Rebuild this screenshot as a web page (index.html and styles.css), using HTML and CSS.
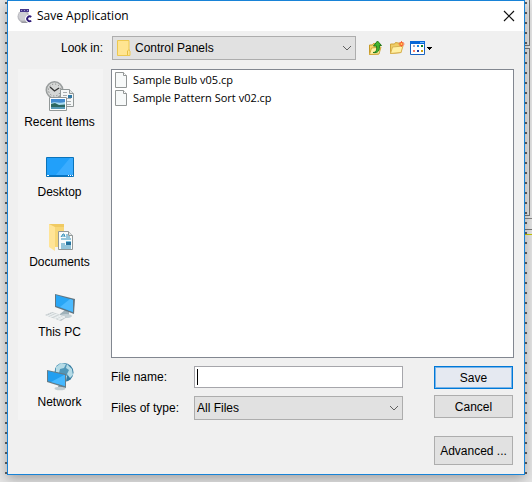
FILE: index.html
```html
<!DOCTYPE html>
<html lang="en">
<head>
<meta charset="utf-8">
<title>Save Application</title>
<meta name="viewport" content="width=device-width, initial-scale=1">
<link rel="stylesheet" href="styles.css">
</head>
<body>
<div class="backdrop" aria-hidden="true">
  <div class="pane pane-top"></div>
  <div class="pane pane-middle"></div>
  <div class="pane-rule"></div>
</div>
<form class="dialog" role="dialog" aria-labelledby="dialog-title">
  <header class="titlebar">
    <svg class="app-icon" width="16" height="16" viewBox="0 0 16 16" aria-hidden="true">
      <circle cx="6.500" cy="8.500" r="6" fill="#b9b9bf"/>
      <circle cx="6" cy="8" r="4.500" fill="#cfcfd4"/>
      <path d="M3 13.500h8l1 1.500H5z" fill="#9a9aa2"/>
      <path d="M3 1h9v3H3z" fill="#493a8b"/>
      <path d="M4 2.500h1m2 0h1m2 0h1" stroke="#a79dd4"/>
      <path d="M14.200 9A2.400 2.400 0 1 0 14.200 12.600" fill="none" stroke="#fff" stroke-width="4"/>
      <path d="M14.200 9A2.400 2.400 0 1 0 14.200 12.600" fill="none" stroke="#2e1a78" stroke-width="1.900"/>
    </svg>
    <h1 id="dialog-title">Save Application</h1>
    <button class="close" type="button" aria-label="Close">
      <svg width="12" height="12" viewBox="0 0 12 12" aria-hidden="true"><path d="m1 1 10 10M11 1 1 11" fill="none" stroke="#111" stroke-width="1.200"/></svg>
    </button>
  </header>
  <div class="content">
    <label class="look-label" for="folder">Look in:</label>
    <div class="toolbar">
      <div class="combo folder-combo">
        <svg class="combo-folder" width="14" height="16" viewBox="0 0 14 16" aria-hidden="true">
          <path d="M.5.500h11.500v9.500l1 1v4.500H.5z" fill="#ffe591" stroke="#edc84f"/>
          <path d="M10.500 15V11l1.500-1.500" fill="none" stroke="#e7bf3f"/>
        </svg>
        <select id="folder"><option>Control Panels</option></select>
        <svg class="chevron" width="10" height="6" viewBox="0 0 10 6" aria-hidden="true"><path d="m1 1 4 4 4-4"/></svg>
      </div>
      <button class="tool" type="button" aria-label="Up one level">
        <svg width="16" height="16" viewBox="0 0 16 16" aria-hidden="true">
          <path d="M1.500 14.500V5h3l1-1.500 5 1V14z" fill="#f3d56b" stroke="#c79b29"/>
          <path d="m1.500 14.500 2-6.500 9.500-1-2 7z" fill="#fff0a3" stroke="#d2a83a"/>
          <path d="M5 12.500c4 0 4-4 3.500-6.500H5.500L9.500 1l4 4.500h-2.200c.7 4.500-1 8-6.300 7z" fill="#42b62e" stroke="#23791e"/>
        </svg>
      </button>
      <button class="tool" type="button" aria-label="New folder">
        <svg width="16" height="16" viewBox="0 0 16 16" aria-hidden="true">
          <path d="M1.500 13.500V4h4l1-1.500 5.500 1v9z" fill="#efcd65" stroke="#d0a43a"/>
          <path d="m1.500 13.500 2-6.500L14 6l-2 6.500z" fill="#fff0a3" stroke="#d9b252"/>
          <path d="M12.500 1v6M9.500 4h6M10.500 2l4 4m0-4-4 4" stroke="#f27845"/>
          <circle cx="12.500" cy="4" r="2" fill="#fa5d2d"/><circle cx="12.500" cy="4" r="1" fill="#ffd15a"/>
        </svg>
      </button>
      <button class="tool tool-view" type="button" aria-label="View menu">
        <svg width="22" height="16" viewBox="0 0 22 16" aria-hidden="true">
          <path d="M.5 1.500h14v13H.5z" fill="#fff" stroke="#1763c2"/>
          <path d="M0 1h15v3H0z" fill="#0867d7"/><path d="M10 2.500h4" stroke="#6db9ff"/>
          <path d="M3 5h2v2H3z" fill="#a8a8c4"/><path d="M7 5h2v2H7z" fill="#1c86e0"/><path d="M11 5h2v2h-2z" fill="#148328"/>
          <path d="M3 10h2v2H3z" fill="#fa7d62"/><path d="M7 10h2v2H7z" fill="#1b3ca0"/><path d="M11 10h2v2h-2z" fill="#c99c12"/>
          <path d="M17 7h5v1h-1v1h-1v1h-1V9h-1V8h-1z"/>
        </svg>
      </button>
    </div>
    <nav class="places" aria-label="Places">
      <button class="place" type="button">
        <svg width="32" height="32" viewBox="0 0 32 32" aria-hidden="true">
          <circle cx="10.500" cy="10" r="8.200" fill="#d5d7d6" stroke="#999d9d" stroke-width="1.600"/>
          <circle cx="10.500" cy="10" r="6" fill="none" stroke="#777" stroke-dasharray="1 2.140"/>
          <path d="m6 7 4.500 4L15 8" fill="none" stroke="#333" stroke-width="1.300"/>
          <path d="M16.500 9.500h9l4 4v13h-13z" fill="#f5f7f7" stroke="#929898"/>
          <path d="M25.500 9.500v4h4" fill="#dde2e2" stroke="#929898"/>
          <path d="M19 12.500h4m-4 3h4m-4 3h8m-8 3h8m-8 3h8" stroke="#a7acaf"/><path d="M24 15h4v3h-4z" fill="#3279a5"/>
          <path d="M5.500 17.500h17v13h-17z" fill="#fff" stroke="#929898"/>
          <path d="M7 19h14v10H7z" fill="#418bd1"/><path d="M7 23c4-2 8 1 14-1v4H7z" fill="#acdcf2"/><path d="m7 24 4-1 4 2 6-.5V29H7z" fill="#2c6862"/><path d="M7 27h14v2H7z" fill="#579ab6"/>
        </svg>
        <span>Recent Items</span>
      </button>
      <button class="place" type="button">
        <svg width="32" height="32" viewBox="0 0 32 32" aria-hidden="true">
          <path d="M2.500 7.500h27v19h-27z" fill="#21a0fa" stroke="#0a73ba"/>
          <path d="M11 26 26 8h3v18z" fill="#3aacff"/><path d="M3 25.500h26" stroke="#0875c5"/><path d="M3 25.500h2m19 0h1m1 0h1m1 0h1" stroke="#fff"/>
        </svg>
        <span>Desktop</span>
      </button>
      <button class="place" type="button">
        <svg width="32" height="32" viewBox="0 0 32 32" aria-hidden="true">
          <path d="M5 4h15v23H5z" fill="#f0ca62"/><path d="m5 4 6 3v24l-6-4z" fill="#ffe497"/><path d="M11 7h9v20h-9z" fill="#f7d778"/>
          <path d="M14.500 11.500h10l4 4v14h-14z" fill="#fafcfc" stroke="#929898"/><path d="M24.500 11.500v4h4" fill="#e0e3e4" stroke="#929898"/>
          <path d="m17 17 2-3h1l1 3m-3-1h2m2-1h2m-2 2h4m-9 2h10m-10 5h4m-4 2h10m-10 2h10" fill="none" stroke="#318eb8"/>
          <path d="M22 21h5v4h-5z" fill="#27749f"/><path d="M22 21h5v1h-5z" fill="#80c4e1"/>
        </svg>
        <span>Documents</span>
      </button>
      <button class="place" type="button">
        <svg width="32" height="32" viewBox="0 0 32 32" aria-hidden="true">
          <path d="m16 24 5-4 4 2v4l-3 2-6-2z" fill="#9fb1b9"/><ellipse cx="22" cy="26" rx="6" ry="2" fill="#c4d0d5"/>
          <path d="m11 4 20 5-1 15-19-7z" fill="#607683"/><path d="m12 5 17 5v12l-17-6z" fill="#28a6f5"/><path d="m16 17 10-8 3 1v12z" fill="#4bbaff"/>
          <path d="m1 25 7-3 15 5-6 4z" fill="#c1c8cb"/><path d="m3 25 14 4m-12-5 14 4M7 23l14 4M6 27l7-3m-3 5 7-3m-3 4 7-3" stroke="#edf1f2"/>
        </svg>
        <span>This PC</span>
      </button>
      <button class="place" type="button">
        <svg width="32" height="32" viewBox="0 0 32 32" aria-hidden="true">
          <circle cx="20" cy="12.500" r="9.500" fill="#347ba0"/><circle cx="18.500" cy="10.500" r="7.500" fill="#5097b8"/>
          <path d="m12 7 5-4 5 1-2 4-4 1-1 4-3-1zM23 4l5 5 1 6-3 3-3-4 2-4-3-2zM19 14l4 2-1 5-4-2z" fill="#b5dbe6"/>
          <path d="m15 25 4-1 1 4-6-1z" fill="#798e98"/><ellipse cx="16" cy="28.500" rx="5.500" ry="1.800" fill="#c1cdd2"/>
          <path d="m3 10 19 4v14L3 22z" fill="#667d88"/><path d="m4 11 17 4v11L4 21z" fill="#229ff0"/><path d="m7 22 13-7 1 0v11z" fill="#45b8ff"/>
        </svg>
        <span>Network</span>
      </button>
    </nav>
    <div class="main">
      <ul class="files" aria-label="Files">
        <li><svg width="12" height="16" viewBox="0 0 12 16" aria-hidden="true"><path d="M.5.500h8l3 3v12H.5z" fill="#f7f9f9" stroke="#929696"/><path d="M8.500.500v3h3" fill="#fff" stroke="#929696"/></svg>Sample Bulb v05.cp</li>
        <li><svg width="12" height="16" viewBox="0 0 12 16" aria-hidden="true"><path d="M.5.500h8l3 3v12H.5z" fill="#f7f9f9" stroke="#929696"/><path d="M8.500.500v3h3" fill="#fff" stroke="#929696"/></svg>Sample Pattern Sort v02.cp</li>
      </ul>
      <div class="bottom">
        <div class="fields">
          <label for="filename">File name:</label>
          <div class="name-field"><input id="filename" type="text" autocomplete="off"><span class="caret" aria-hidden="true"></span></div>
          <label for="filetype">Files of type:</label>
          <div class="combo type-combo">
            <select id="filetype"><option>All Files</option></select>
            <svg class="chevron" width="10" height="6" viewBox="0 0 10 6" aria-hidden="true"><path d="m1 1 4 4 4-4"/></svg>
          </div>
        </div>
        <div class="actions">
          <button class="action primary" type="button">Save</button>
          <button class="action" type="button">Cancel</button>
          <button class="action advanced" type="button">Advanced ...</button>
        </div>
      </div>
    </div>
  </div>
</form>
</body>
</html>
```
FILE: styles.css
```css
* { box-sizing: border-box; }

body {
  margin: 0;
  padding: 0 7px 7px;
  position: relative;
  background: #d8d8d8;
  color: #000;
  font: 12px/16px "Liberation Sans", Arial, sans-serif;
}

button, input, select { font: inherit; color: inherit; }
button { padding: 0; }
svg { display: block; flex: none; }

/* Window behind the dialog */
.backdrop {
  position: absolute;
  inset: 0;
  overflow: hidden;
  background:
    repeating-linear-gradient(to bottom, transparent 0 2px, #606265 2px 4px, transparent 4px 10px) 5px 0 / 2px 475px no-repeat,
    repeating-linear-gradient(to bottom, transparent 0 2px, #606265 2px 4px, transparent 4px 10px) right 5px top 0 / 2px 475px no-repeat,
    #e6e6e6;
}
.pane {
  position: absolute;
  right: 2px;
  width: 5px;
  border-right: 1px solid #777;
  border-bottom: 1px solid #777;
}
.pane-top { top: 0; height: 46px; }
.pane-middle { top: 48px; height: 168px; border-top: 1px solid #777; }
.pane-rule {
  position: absolute;
  top: 218px;
  right: 0;
  width: 7px;
  height: 17px;
  border-top: 1px solid #888;
  border-bottom: 1px solid #c8c800;
  background: linear-gradient(#777, #777) 0 10px / 100% 1px no-repeat;
}

.dialog {
  position: relative;
  border: 1px solid #1883d7;
  background: #f0f0f0;
  box-shadow: 0 4px 12px rgba(0, 0, 0, .3);
}

.titlebar {
  display: flex;
  align-items: center;
  gap: 4px;
  height: 30px;
  padding: 0 9px;
  background: #fff;
}
.titlebar h1 {
  flex: 1;
  margin: 0;
  font: 12px/16px "Open Sans", "Noto Sans", sans-serif;
}
.close { border: 0; background: none; }

.content {
  display: grid;
  grid-template-columns: 85px 1fr;
  column-gap: 8px;
  row-gap: 9px;
  padding: 5px 10px 9px;
}
.look-label { align-self: center; justify-self: end; }
.toolbar { display: flex; align-items: center; padding-left: 1px; }

.combo { position: relative; }
.combo select {
  display: block;
  width: 100%;
  height: 24px;
  padding: 0 20px 0 2px;
  border: 1px solid #adadad;
  border-radius: 0;
  background: #e1e1e1;
  appearance: none;
}
.folder-combo { flex: 1; margin-right: 12px; }
.folder-combo select { padding-left: 22px; }
.combo-folder { position: absolute; left: 5px; top: 4px; }
.chevron {
  position: absolute;
  right: 4px;
  top: 9px;
  fill: none;
  stroke: #606060;
  pointer-events: none;
}
.tool { margin-right: 5px; border: 0; background: none; }
.tool-view { margin-right: 82px; }

.places { align-self: start; padding: 0 2px 1px 0; background: #f4f4f4; }
.place {
  display: flex;
  flex-direction: column;
  align-items: center;
  gap: 2px;
  width: 100%;
  height: 70px;
  padding-top: 11px;
  border: 0;
  background: none;
}

.files {
  height: 289px;
  margin: 0;
  padding: 1px 3px;
  border: 1px solid #828790;
  background: #fff;
  list-style: none;
  font: 11px/18px "Open Sans", "Noto Sans", sans-serif;
}
.files li { display: flex; align-items: center; gap: 6px; height: 18px; }

.bottom {
  display: flex;
  align-items: flex-start;
  gap: 31px;
  padding: 8px 1px 0 0;
}
.fields {
  display: grid;
  flex: 1;
  grid-template-columns: 83px 1fr;
  align-items: center;
  row-gap: 8px;
}
.name-field { position: relative; }
.name-field input {
  display: block;
  width: 100%;
  height: 22px;
  padding: 0 4px;
  border: 1px solid #a6a6ab;
  background: #fff;
}
.caret {
  position: absolute;
  left: 3px;
  top: 3px;
  width: 1px;
  height: 16px;
  background: #000;
}

.actions { display: flex; flex-direction: column; gap: 6px; width: 79px; }
.action {
  height: 23px;
  border: 1px solid #adadad;
  background: #e1e1e1;
}
.primary {
  border-color: #0078d7;
  background: #e5e9f1;
  box-shadow: inset 0 0 0 1px #79b5ea;
}
.advanced { height: 29px; margin-top: 12px; }
```
